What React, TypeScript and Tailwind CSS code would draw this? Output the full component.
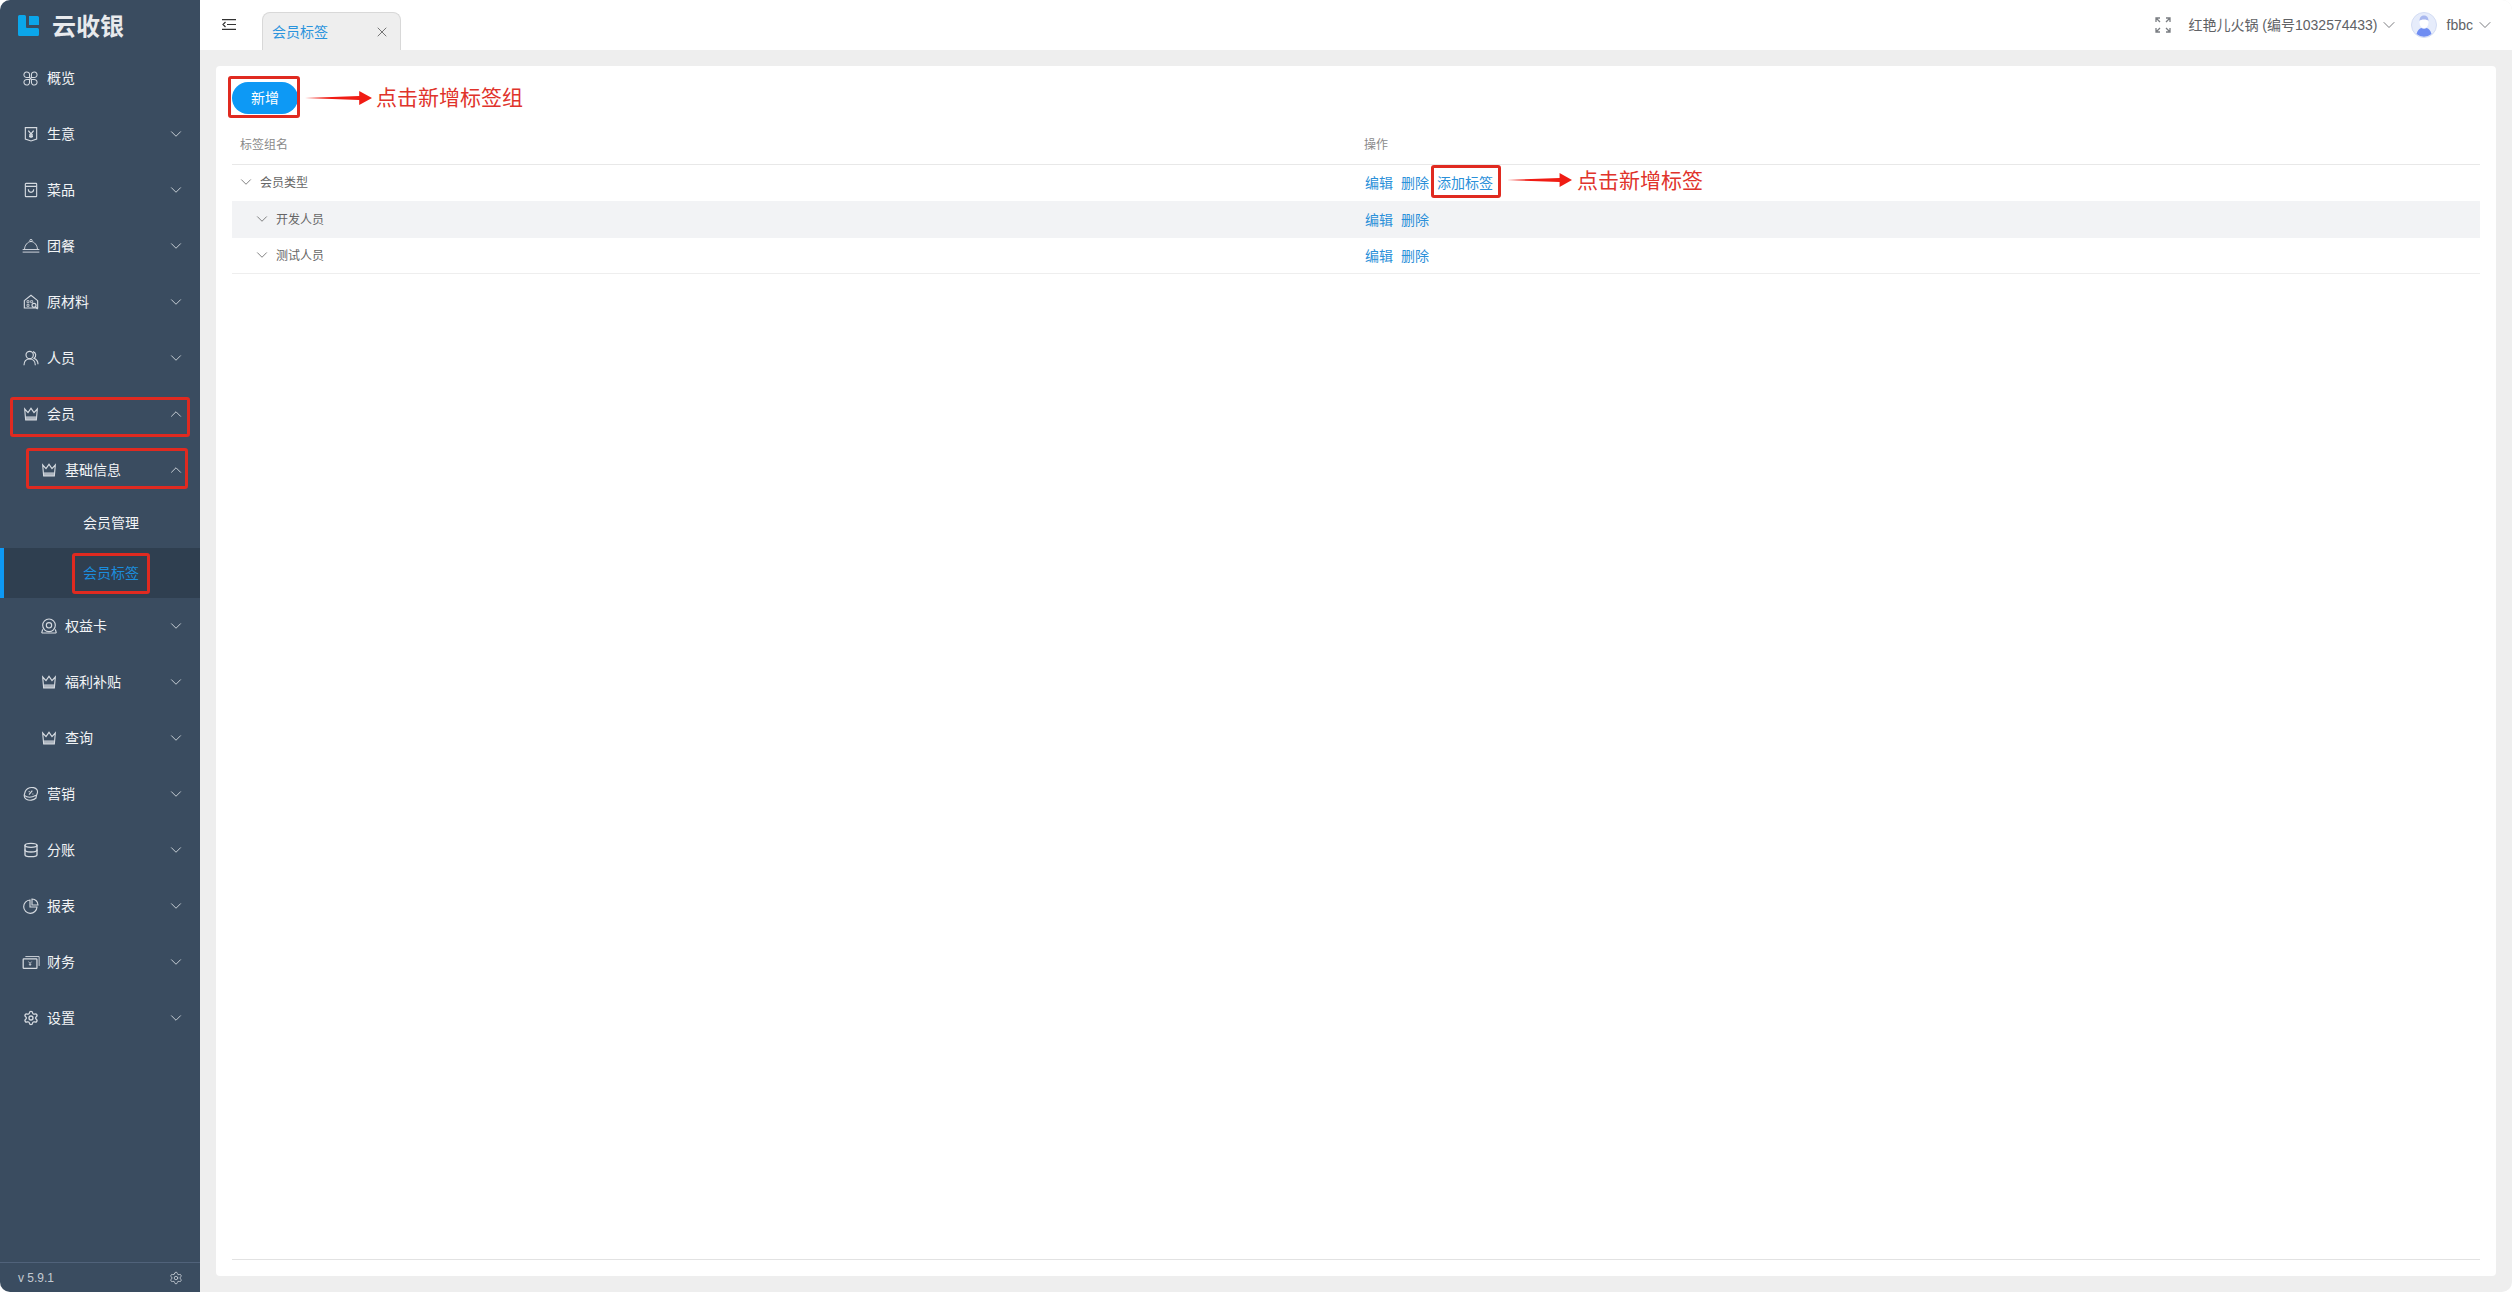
import React from "react";
import { ChevronDown, ChevronUp, Database, Settings, X } from "lucide-react";

const font = "font-['Liberation_Sans','Noto_Sans_CJK_SC',sans-serif]";

type IconProps = { className?: string };

function Svg({ children, className }: { children: React.ReactNode; className?: string }) {
  return (
    <svg viewBox="0 0 24 24" fill="none" stroke="currentColor" strokeWidth="1.7" className={className}>
      {children}
    </svg>
  );
}

const Overview = ({ className }: IconProps) => (
  <Svg className={className}>
    <path d="M10.500 10.500H6.500a4.500 4.500 0 1 1 4-4.500zM13.500 10.500h4a4.500 4.500 0 1 0-4-4.500zM10.500 13.500H6.500a4.500 4.500 0 1 0 4 4.500zM13.500 13.500h4a4.500 4.500 0 1 1-4 4.500z" />
    <rect x="10.500" y="10.500" width="3" height="3" fill="currentColor" stroke="none" />
  </Svg>
);
const Business = ({ className }: IconProps) => (
  <Svg className={className}>
    <path d="M3.500 2.500h17v17l-8.500 3-8.500-3z" />
    <path d="M8 7l4 5 4-5M12 12v6M9 13.500h6M9 16h6" strokeWidth="1.900" />
  </Svg>
);
const Bag = ({ className }: IconProps) => (
  <Svg className={className}>
    <rect x="3.500" y="2" width="17" height="20" rx="1" />
    <path d="M3.500 6.500h17M8 11c0 6 8 6 8 0" />
  </Svg>
);
const Dish = ({ className }: IconProps) => (
  <svg viewBox="0 0 28 24" fill="none" stroke="currentColor" strokeWidth="1.500" className={className}>
    <circle cx="14" cy="3.500" r="1.800" />
    <path d="M4 17c0-6 5-12 10-12s10 6 10 12M1 17.500h26M1 21.500h26" />
  </svg>
);
const Store = ({ className }: IconProps) => (
  <Svg className={className}>
    <path d="M2 10l10-8 10 8v11H2z" />
    <path d="M6 10h3v3H6zM11.500 10h3v3h-3zM6 15.500h3v3H6z" strokeWidth="1.200" />
    <circle cx="16.500" cy="17" r="3" fill="#3a4c60" />
    <path d="M19 19.500l3 3" />
  </Svg>
);
const People = ({ className }: IconProps) => (
  <Svg className={className}>
    <circle cx="10" cy="7.500" r="5.500" />
    <path d="M1.500 23c0-6 3.500-9.500 8.500-9.500s8.500 3.500 8.500 9.500M15 2.500a5.500 5.500 0 0 1 1.500 10c3.500 1.500 6 5 6 9" />
  </Svg>
);
const Crown = ({ className }: IconProps) => (
  <Svg className={className}>
    <path d="M2.500 4.500l5 5.500L12 3.500l4.500 6.500 5-5.500L20 21H4z" />
    <path d="M4 15.500h16L20 21H4z" fill="currentColor" fillOpacity="0.75" stroke="none" />
  </Svg>
);
const Card = ({ className }: IconProps) => (
  <Svg className={className}>
    <circle cx="12" cy="11" r="9.500" />
    <circle cx="12" cy="11" r="4" />
    <path d="M1 22.500h22M2.500 17l-1.500 5.500M21.500 17l1.500 5.500" />
  </Svg>
);
const Marketing = ({ className }: IconProps) => (
  <Svg className={className}>
    <path d="M3.500 8c2-4 7-6.500 12.500-5.500 4.500 1 6.500 4 5.500 8-1 2.500-2 5-2 7.500-3.500 3.500-10 4.500-14.500 2-3-2-3.500-4.500-3-7z" />
    <path d="M9 13l5-6M8.500 8.500h1.500M14 12h1.500M2 14c4 3.500 11 3.500 17.500 0" />
  </Svg>
);
const Pie = ({ className }: IconProps) => (
  <Svg className={className}>
    <path d="M10.500 3a10 10 0 1 0 10.500 10.500H10.500z" />
    <path d="M13.500 1.500a9 9 0 0 1 9 9h-9z" />
  </Svg>
);
const Wallet = ({ className }: IconProps) => (
  <svg viewBox="0 0 28 24" fill="none" stroke="currentColor" strokeWidth="1.500" className={className}>
    <rect x="1.500" y="6" width="22" height="15.500" rx="1" strokeWidth="2" />
    <path d="M5 2.500h22v15" />
    <path d="M10 10.500l2.500 3 2.500-3M12.500 13.500v4M10.500 15h4" strokeWidth="1.200" />
  </svg>
);

type MenuItem = { label: string; icon: React.ComponentType<IconProps>; arrow?: "down" | "up" | "none"; sub?: boolean; iconClass?: string };

const topItems: MenuItem[] = [
  { label: "概览", icon: Overview, arrow: "none", iconClass: "h-[15px] w-[15px]" },
  { label: "生意", icon: Business },
  { label: "菜品", icon: Bag },
  { label: "团餐", icon: Dish, iconClass: "h-[16px] w-[18px] shrink-0" },
  { label: "原材料", icon: Store },
  { label: "人员", icon: People },
  { label: "会员", icon: Crown, arrow: "up" },
  { label: "基础信息", icon: Crown, arrow: "up", sub: true },
];

const lowerItems: MenuItem[] = [
  { label: "权益卡", icon: Card, sub: true },
  { label: "福利补贴", icon: Crown, sub: true },
  { label: "查询", icon: Crown, sub: true },
  { label: "营销", icon: Marketing },
  { label: "分账", icon: Database },
  { label: "报表", icon: Pie },
  { label: "财务", icon: Wallet, iconClass: "h-[15px] w-[18px] shrink-0" },
  { label: "设置", icon: Settings },
];

function MenuRow({ item }: { item: MenuItem }) {
  const Icon = item.icon;
  const arrow = item.arrow ?? "down";
  return (
    <div className={`flex h-14 items-center pr-[15px] text-sm text-[#f2f4f6] ${item.sub ? "pl-10" : "pl-[22px]"}`}>
      <span className="mr-2 flex w-[17px] shrink-0 items-center justify-center text-[#d5dae0]">
        <Icon className={item.iconClass ?? "h-4 w-4 shrink-0"} />
      </span>
      <span className="flex-1">{item.label}</span>
      {arrow === "down" && <ChevronDown className="h-[18px] w-[18px] text-[#d5dae0]" strokeWidth={1.2} />}
      {arrow === "up" && <ChevronUp className="h-[18px] w-[18px] text-[#d5dae0]" strokeWidth={1.2} />}
    </div>
  );
}

function Sidebar() {
  return (
    <aside className="flex h-full w-[200px] shrink-0 flex-col bg-[#3a4c60]">
      <div className="flex h-[50px] items-center gap-[13px] pl-[18px]">
        <svg viewBox="0 0 21 21" className="h-[21px] w-[21px]">
          <path
            d="M1.500 0h5A1.500 1.500 0 0 1 8 1.500V12a1 1 0 0 0 1 1h10.500a1.500 1.500 0 0 1 1.500 1.500v5a1.500 1.500 0 0 1-1.500 1.500h-18A1.500 1.500 0 0 1 0 19.500v-18A1.500 1.500 0 0 1 1.500 0zM11 1h8.500A1.500 1.500 0 0 1 21 2.500V10H11z"
            fill="#0ba6ea"
          />
        </svg>
        <span className="pt-[3px] text-2xl font-bold text-[#e8eaed]">云收银</span>
      </div>
      {topItems.map((item) => (
        <MenuRow key={item.label} item={item} />
      ))}
      <div className="flex h-[50px] items-center pl-[83px] text-sm text-[#f2f4f6]">会员管理</div>
      <div className="flex h-[50px] items-center border-l-4 border-[#0d99f5] bg-[#2f3f50] pl-[79px] text-sm text-[#1b8ddd]">
        会员标签
      </div>
      {lowerItems.map((item) => (
        <MenuRow key={item.label} item={item} />
      ))}
      <div className="mt-auto flex h-[30px] items-center justify-between border-t border-[#50627a] pl-[18px] pr-[17px] text-xs text-[#c3cad2]">
        <span>v 5.9.1</span>
        <Settings className="h-[14px] w-[14px]" strokeWidth={1.5} />
      </div>
    </aside>
  );
}

function Header() {
  return (
    <header className="flex h-[50px] shrink-0 items-end bg-white pl-[22px] pr-[17px]">
      <svg viewBox="0 0 14 11" className="mb-[20px] h-[11px] w-[14px] text-[#333]" fill="none" stroke="currentColor" strokeWidth="1.200">
        <path d="M0 .6h14M5 5.500h9M0 10.400h14M3.500 3L1 5.500 3.500 8" />
      </svg>
      <div className="ml-[26px] flex h-[38px] w-[139px] items-center justify-between rounded-t-lg border border-b-0 border-[#d8d8d8] bg-[#eeeeee] pl-[9px] pr-[10px] text-sm text-[#2b94dd]">
        <span>会员标签</span>
        <X className="h-4 w-4 text-[#555]" strokeWidth={1.2} />
      </div>
      <div className="ml-auto flex h-full items-center text-sm text-[#606266]">
        <svg viewBox="0 0 16 16" className="h-4 w-4" fill="none" stroke="#7a7d82" strokeWidth="1.300">
          <path d="M1 5V1h4M1 1l4 4M15 5V1h-4M15 1l-4 4M1 11v4h4M1 15l4-4M15 11v4h-4M15 15l-4-4" />
        </svg>
        <span className="ml-[17px]">红艳儿火锅 (编号1032574433)</span>
        <ChevronDown className="ml-px h-5 w-5" strokeWidth={1} />
        <svg viewBox="0 0 26 26" className="ml-3 h-[26px] w-[26px]">
          <circle cx="13" cy="13" r="12.500" fill="#e6ecfb" stroke="#d3dcf3" />
          <ellipse cx="13" cy="10.500" rx="4.500" ry="5.500" fill="#fff" />
          <path d="M5.500 22c1-4 3-5.500 5-6 1 1 4 1 5 0 2 .5 4 2 5 6a12 12 0 0 1-15 0z" fill="#6f8df2" />
          <path d="M8.500 9c0-4 2-5.500 4.500-5.500s4.500 1.500 4.500 5.500c-1-2-8-2-9 0z" fill="#a9b8ef" />
        </svg>
        <span className="ml-[10px]">fbbc</span>
        <ChevronDown className="ml-[2px] h-5 w-5" strokeWidth={1} />
      </div>
    </header>
  );
}

function Actions({ add }: { add?: boolean }) {
  return (
    <div className="flex gap-2 pl-[9px] text-sm text-[#2b90d9]">
      <span>编辑</span>
      <span>删除</span>
      {add && <span>添加标签</span>}
    </div>
  );
}

function TableRow({ label, sub, add, shaded, h }: { label: string; sub?: boolean; add?: boolean; shaded?: boolean; h: string }) {
  return (
    <div className={`flex items-center ${h} ${shaded ? "bg-[#f2f3f5]" : ""}`}>
      <div className={`flex w-[1124px] items-center text-xs text-[#666] ${sub ? "pl-[21px]" : "pl-[5px]"}`}>
        <ChevronDown className="mr-[5px] h-[18px] w-[18px] -translate-y-px text-[#666]" strokeWidth={1.1} />
        <span>{label}</span>
      </div>
      <Actions add={add} />
    </div>
  );
}

function Arrow({ className }: { className: string }) {
  return (
    <svg viewBox="0 0 68 14" className={className} preserveAspectRatio="none">
      <path d="M0 7L55 5 55 0 68 7 55 14 55 9z" fill="#f01c14" />
    </svg>
  );
}

function Box({ className }: { className: string }) {
  return <div className={`pointer-events-none absolute rounded-[3px] border-[3px] border-[#e02a20] ${className}`} />;
}

function Content() {
  return (
    <main className="flex flex-1 p-4">
      <section className="flex flex-1 flex-col rounded bg-white px-4 pb-4 pt-4">
        <button className="h-8 w-[66px] rounded-full bg-[#0d99f5] text-sm text-white">新增</button>
        <div className="mt-3 flex h-[39px] items-center border-b border-[#e8e8e8] text-xs text-[#8a8a8a]">
          <span className="w-[1124px] pl-2">标签组名</span>
          <span className="pl-2">操作</span>
        </div>
        <TableRow label="会员类型" add h="h-[36px]" />
        <TableRow label="开发人员" sub shaded h="h-[37px]" />
        <div className="border-b border-[#eeeeee]">
          <TableRow label="测试人员" sub h="h-[35px]" />
        </div>
        <div className="mt-auto border-b border-[#e2e2e2]" />
      </section>
    </main>
  );
}

export default function App() {
  return (
    <div className={`${font} h-[1292px] w-[2512px] overflow-hidden bg-white`}>
      <div className="relative flex h-full overflow-hidden rounded-[10px] bg-[#eeeeee]">
        <Sidebar />
        <div className="flex min-w-0 flex-1 flex-col">
          <Header />
          <Content />
        </div>

        {/* red annotations over the page */}
        <Box className="left-[10px] top-[397px] h-[40px] w-[180px]" />
        <Box className="left-[26px] top-[448px] h-[41px] w-[162px]" />
        <Box className="left-[72px] top-[553px] h-[41px] w-[78px]" />
        <Box className="left-[228px] top-[76px] h-[42px] w-[72px]" />
        <Box className="left-[1431px] top-[165px] h-[33px] w-[70px]" />
        <Arrow className="absolute left-[305px] top-[91px] h-[14px] w-[67px]" />
        <Arrow className="absolute left-[1507px] top-[173px] h-[14px] w-[65px]" />
        <span className="absolute left-[376px] top-[85px] text-[21px] leading-[26px] text-[#e0332b]">点击新增标签组</span>
        <span className="absolute left-[1577px] top-[168px] text-[21px] leading-[26px] text-[#e0332b]">点击新增标签</span>
      </div>
    </div>
  );
}
